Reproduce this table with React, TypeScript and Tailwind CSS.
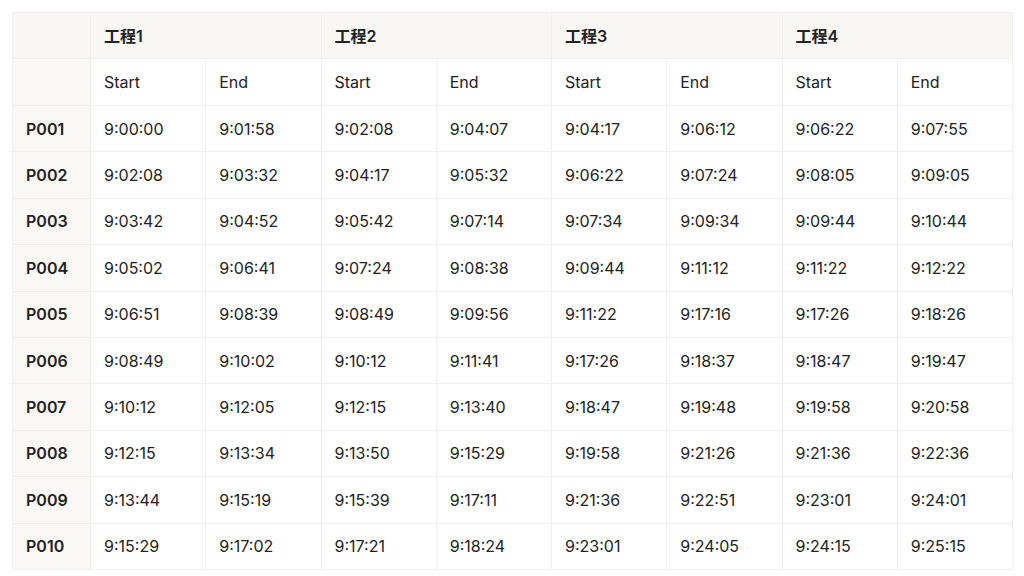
const groups = ["工程1", "工程2", "工程3", "工程4"]

const rows: [string, string[]][] = [
  ["P001", ["9:00:00", "9:01:58", "9:02:08", "9:04:07", "9:04:17", "9:06:12", "9:06:22", "9:07:55"]],
  ["P002", ["9:02:08", "9:03:32", "9:04:17", "9:05:32", "9:06:22", "9:07:24", "9:08:05", "9:09:05"]],
  ["P003", ["9:03:42", "9:04:52", "9:05:42", "9:07:14", "9:07:34", "9:09:34", "9:09:44", "9:10:44"]],
  ["P004", ["9:05:02", "9:06:41", "9:07:24", "9:08:38", "9:09:44", "9:11:12", "9:11:22", "9:12:22"]],
  ["P005", ["9:06:51", "9:08:39", "9:08:49", "9:09:56", "9:11:22", "9:17:16", "9:17:26", "9:18:26"]],
  ["P006", ["9:08:49", "9:10:02", "9:10:12", "9:11:41", "9:17:26", "9:18:37", "9:18:47", "9:19:47"]],
  ["P007", ["9:10:12", "9:12:05", "9:12:15", "9:13:40", "9:18:47", "9:19:48", "9:19:58", "9:20:58"]],
  ["P008", ["9:12:15", "9:13:34", "9:13:50", "9:15:29", "9:19:58", "9:21:26", "9:21:36", "9:22:36"]],
  ["P009", ["9:13:44", "9:15:19", "9:15:39", "9:17:11", "9:21:36", "9:22:51", "9:23:01", "9:24:01"]],
  ["P010", ["9:15:29", "9:17:02", "9:17:21", "9:18:24", "9:23:01", "9:24:05", "9:24:15", "9:25:15"]],
]

export default function App() {
  return (
    <main className="w-[1024px] h-[576px] bg-white pt-[12px] pl-[12px] font-['Inter','Noto_Sans_CJK_SC',sans-serif] text-[#222222]">
      <table className="w-[1001px] table-fixed border-collapse text-[16px]">
        <colgroup>
          <col className="w-[78px]" />
          {Array.from({ length: 8 }).map((_, i) => (
            <col key={i} />
          ))}
        </colgroup>
        <thead>
          <tr className="h-[46px] bg-[#f9f7f4]">
            <th className="border border-[#f0eeeb]"></th>
            {groups.map((g) => (
              <th key={g} colSpan={2} className="border border-[#f0eeeb] pl-[13px] text-left font-semibold">
                {g}
              </th>
            ))}
          </tr>
          <tr className="h-[47px]">
            <th className="border border-[#f0eeeb] bg-[#faf8f5]"></th>
            {groups.map((g) => (
              <>
                <th key={g + "s"} className="border border-[#f0eeeb] pl-[13px] text-left font-normal">Start</th>
                <th key={g + "e"} className="border border-[#f0eeeb] pl-[13px] text-left font-normal">End</th>
              </>
            ))}
          </tr>
        </thead>
        <tbody>
          {rows.map(([id, times]) => (
            <tr key={id} className="h-[46.4px]">
              <td className="border border-[#f0eeeb] bg-[#faf8f5] pl-[13px] font-semibold">{id}</td>
              {times.map((t, i) => (
                <td key={i} className="border border-[#f0eeeb] pl-[13px]">{t}</td>
              ))}
            </tr>
          ))}
        </tbody>
      </table>
    </main>
  )
}
